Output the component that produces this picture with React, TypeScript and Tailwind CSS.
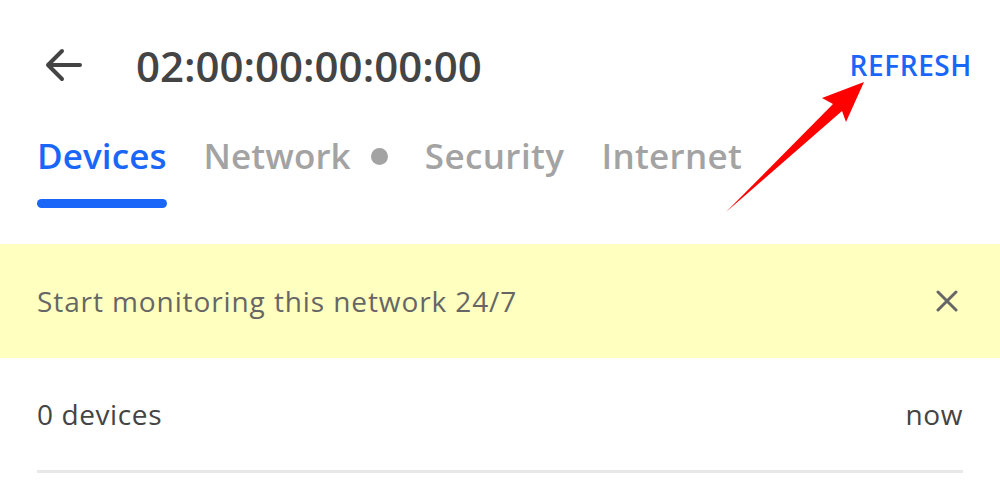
import React from "react";

export default function App() {
  return (
    <div
      className="relative w-[1000px] h-[502px] overflow-hidden bg-white"
      style={{ fontFamily: '"Open Sans", "Noto Sans", sans-serif' }}
    >
      {/* Header */}
      <div className="flex items-center h-[132px] pl-[44px] pr-[28px] pb-[2px]">
        <svg width="38" height="34" viewBox="0 0 38 34" className="shrink-0">
          <path d="M36 17H4M18 3L4 17l14 14" fill="none" stroke="#444" strokeWidth="4" strokeLinecap="round" strokeLinejoin="round" />
        </svg>
        <div className="ml-[54px] text-[42px] font-semibold text-[#444] tracking-[0px]">02:00:00:00:00:00</div>
        <div className="ml-auto text-[28px] font-semibold text-[#1a66f8] tracking-[0.6px]">REFRESH</div>
      </div>

      {/* Tabs */}
      <div className="flex items-start pl-[37px] h-[112px]">
        <div className="flex flex-col">
          <div className="text-[35px] font-semibold text-[#1a66f8] leading-[48px] tracking-[0.1px]">Devices</div>
          <div className="mt-[19px] h-[9px] rounded-full bg-[#1a66f8]" />
        </div>
        <div className="ml-[37px] flex items-center leading-[48px]">
          <span className="text-[35px] font-semibold text-[#a3a3a3] tracking-[0.1px]">Network</span>
          <span className="ml-[20px] w-[17px] h-[17px] rounded-full bg-[#a3a3a3]" />
        </div>
        <div className="ml-[37px] text-[35px] font-semibold text-[#a3a3a3] leading-[48px] tracking-[0.4px]">Security</div>
        <div className="ml-[37px] text-[35px] font-semibold text-[#a3a3a3] leading-[48px] tracking-[0.3px]">Internet</div>
      </div>

      {/* Banner */}
      <div className="flex items-center justify-between h-[114px] bg-[#ffffbf] pl-[37px] pr-[42px]">
        <span className="text-[28px] text-[#666] tracking-[0.9px]">Start monitoring this network 24/7</span>
        <svg width="22" height="22" viewBox="0 0 22 22">
          <path d="M2 2l18 18M20 2L2 20" stroke="#666" strokeWidth="3" strokeLinecap="round" />
        </svg>
      </div>

      {/* List row */}
      <div className="mx-[37px] flex items-center justify-between h-[115px] border-b-[3px] border-[#e8e8e8]">
        <span className="text-[28px] text-[#444] tracking-[0.6px]">0 devices</span>
        <span className="text-[28px] text-[#444] tracking-[0.6px]">now</span>
      </div>

      {/* Red annotation arrow */}
      <svg className="absolute left-0 top-0 pointer-events-none" width="1000" height="502">
        <path d="M726 212 L833 104 L822 98 L864 82 L846 122 L842 111 Z" fill="#ff0000" />
      </svg>
    </div>
  );
}
